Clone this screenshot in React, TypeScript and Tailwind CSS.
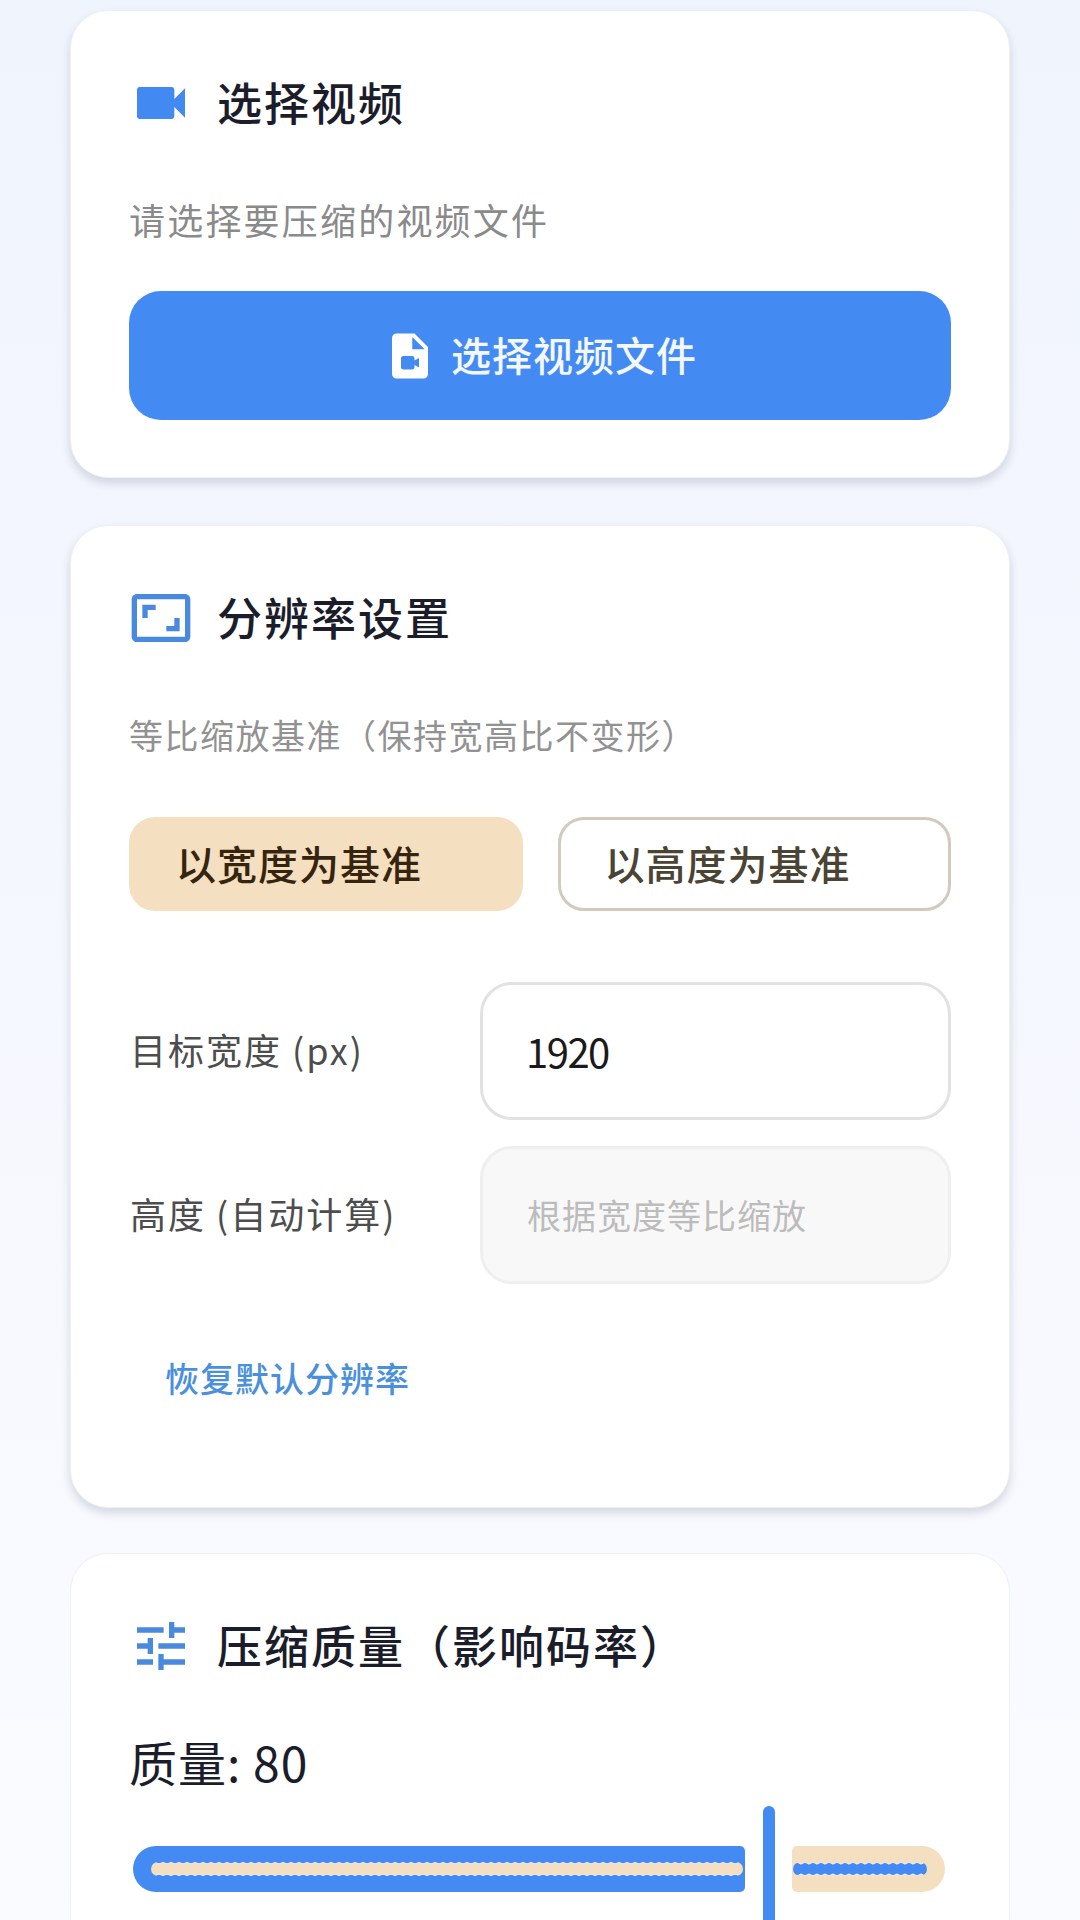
import React from 'react';
import { MdVideocam, MdVideoFile, MdAspectRatio, MdTune } from 'react-icons/md';

function CardTitle({ icon, title }: { icon: React.ReactNode; title: string }) {
  return (
    <div className="flex h-[64px] items-center gap-[24px]">
      {icon}
      <h2 className="pb-[2px] text-[45px] leading-[60px] font-medium tracking-[2px] text-[#1b1d2b]">{title}</h2>
    </div>
  );
}

function FieldRow({ label, children }: { label: string; children: React.ReactNode }) {
  return (
    <div className="grid grid-cols-[351px_1fr] items-center">
      <span className="pb-[4px] pl-[1px] text-[36px] leading-[50px] tracking-[2px] text-[#4d4d4d]">{label}</span>
      {children}
    </div>
  );
}

export default function App() {
  return (
    <div className="h-[1920px] overflow-hidden bg-gradient-to-b from-[#f0f4fd] to-[#fafbff] px-[70px] pt-[10px] font-['Noto_Sans_CJK_SC',sans-serif]">
      <section className="rounded-[38px] border border-[#eef0f5] bg-white px-[58px] pt-[60px] pb-[57px] shadow-[0_5px_10px_rgba(30,40,70,0.16)]">
        <CardTitle icon={<MdVideocam className="size-[64px] text-[#4289f2]" />} title="选择视频" />
        <p className="mt-[59px] text-[36px] leading-[50px] tracking-[2.2px] text-[#8a8a8a]">请选择要压缩的视频文件</p>
        <button className="mt-[47px] flex h-[129px] w-full items-center justify-center gap-[14px] rounded-[32px] bg-[#438bf3] pb-[3px] text-[40px] font-medium tracking-[1px] text-[#f3f7fe]">
          <MdVideoFile className="mt-[3px] size-[54px] text-white" />
          选择视频文件
        </button>
      </section>

      <section className="mt-[47px] rounded-[38px] border border-[#eef0f5] bg-white px-[58px] pt-[60px] pb-[103px] shadow-[0_5px_10px_rgba(30,40,70,0.16)]">
        <CardTitle icon={<MdAspectRatio className="size-[64px] text-[#4a8ade]" />} title="分辨率设置" />
        <p className="mt-[60px] text-[34px] leading-[50px] tracking-[1.5px] text-[#929292]">等比缩放基准（保持宽高比不变形）</p>

        <div className="mt-[57px] grid grid-cols-2 gap-[35px]">
          <button className="h-[94px] rounded-[26px] bg-[#f5dfc1] pb-[3px] pl-[47px] text-left text-[40px] font-medium tracking-[1px] text-[#35250f]">
            以宽度为基准
          </button>
          <button className="h-[94px] rounded-[26px] border-[3px] border-[#d2cbbd] bg-white pb-[3px] pl-[44px] text-left text-[40px] font-medium tracking-[1px] text-[#4b4334]">
            以高度为基准
          </button>
        </div>

        <div className="mt-[71px] flex flex-col gap-[26px]">
          <FieldRow label="目标宽度 (px)">
            <input
              readOnly
              value="1920"
              className="h-[138px] w-full rounded-[32px] border-[3px] border-[#e2e2e2] bg-white px-[43px] text-[40px] tracking-[-1.5px] text-[#1a1a1a] outline-none"
            />
          </FieldRow>
          <FieldRow label="高度 (自动计算)">
            <input
              disabled
              placeholder="根据宽度等比缩放"
              className="h-[138px] w-full rounded-[32px] border-[3px] border-[#efefef] bg-[#f8f8f8] px-[44px] pb-[2px] text-[34px] tracking-[1px] outline-none placeholder:text-[#bcbcbc]"
            />
          </FieldRow>
        </div>

        <a className="mt-[69px] mb-[1px] ml-[36px] block text-[34px] leading-[50px] font-medium tracking-[1px] text-[#4a90dc]">恢复默认分辨率</a>
      </section>

      <section className="mt-[45px] rounded-[38px] border border-[#eef0f5] bg-white px-[58px] pt-[60px] pb-[60px]">
        <CardTitle icon={<MdTune className="size-[64px] text-[#4a8ade]" />} title="压缩质量（影响码率）" />
        <p className="mt-[53px] text-[48px] leading-[60px] tracking-[1px] text-[#1b1d2b]">质量: 80</p>

        <div className="mt-[15px] flex h-[126px] items-center pl-[4px]">
          <div className="flex h-[46px] w-[612px] items-center rounded-l-[23px] rounded-r-[5px] bg-[#438bf3] pr-[2px] pl-[18px]">
            <div className="h-[14px] w-full rounded-full bg-[radial-gradient(circle,#f5dfc1_5.5px,#e6e8ec_6px,#e6e8ec_6.5px,transparent_7px)] bg-[length:8px_14px]" />
          </div>
          <div className="ml-[18px] h-full w-[12px] rounded-full bg-[#438bf3]" />
          <div className="ml-[17px] flex h-[46px] w-[153px] items-center rounded-l-[5px] rounded-r-[23px] bg-[#f5dfc1] pr-[18px] pl-[1px]">
            <div className="h-[14px] w-full rounded-full bg-[radial-gradient(circle,#438bf3_5.5px,#e6e8ec_6px,#e6e8ec_6.5px,transparent_7px)] bg-[length:8px_14px]" />
          </div>
        </div>
      </section>
    </div>
  );
}
